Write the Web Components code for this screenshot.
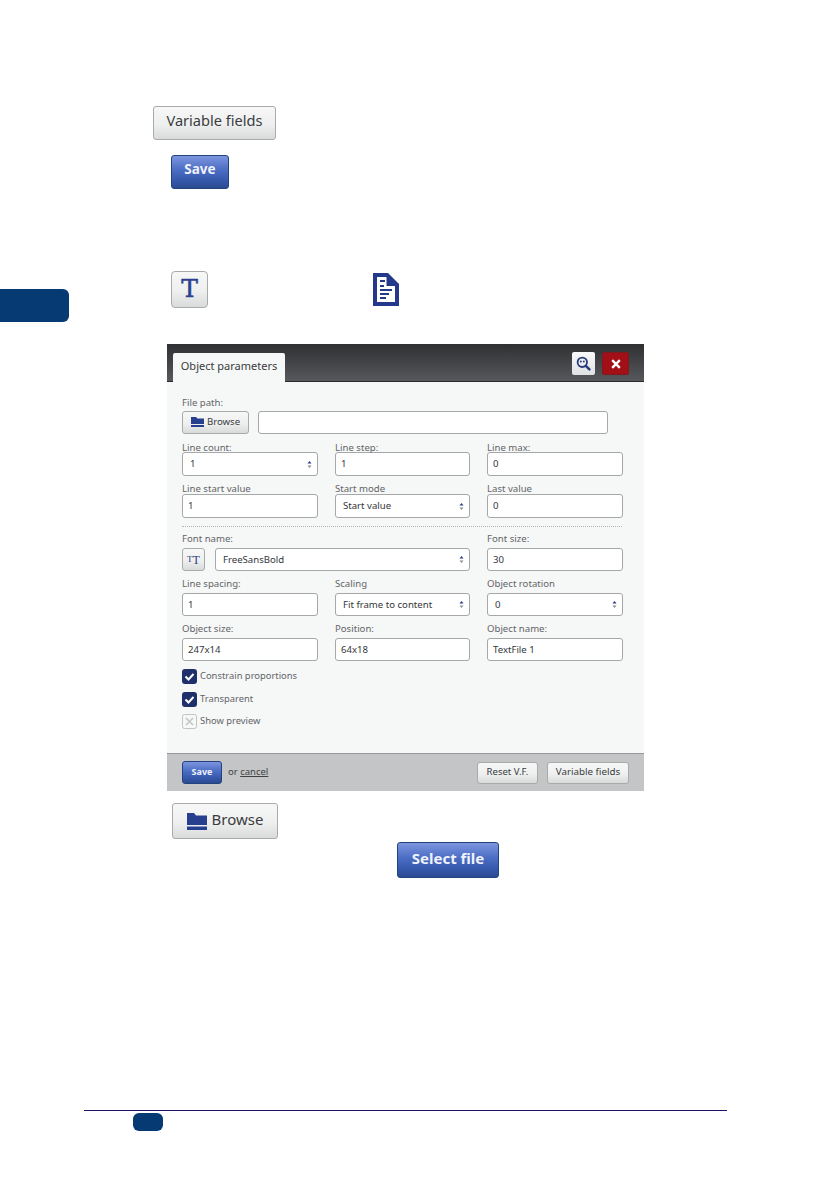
<!DOCTYPE html>
<html>
<head>
<meta charset="utf-8">
<title>Object parameters</title>
<style>
html, body { margin:0; padding:0; background:#fff; }
</style>
</head>
<body>

<template id="tpl-btn">
	<style>
		:host {
			display:inline-flex;
			box-sizing:border-box;
			align-items:center;
			justify-content:center;
			gap:var(--btn-gap, 5px);
			width:var(--w, auto);
			height:var(--h, 23px);
			padding-bottom:var(--pb, 1px);
			border:1px solid #a9abab;
			border-radius:var(--r, 3px);
			background:linear-gradient(#f7f7f7, #eeefef 55%, #d9dada);
			color:#3a3c40;
			font:var(--fs, 11px)/1 "Noto Sans", sans-serif;
			white-space:nowrap;
		}
		:host([blue]) {
			border-color:#23437f;
			background:linear-gradient(#7d95df, #4a6cc3 45%, #3a5cb0 70%, #2a4a92);
			color:#eef2fb;
			font-weight:700;
		}
	</style>
	<slot></slot>
</template>

<template id="tpl-field">
	<style>
		:host { display:block; font:9.6px/1 "Noto Sans", sans-serif; }
		.label {
			height:var(--lh, 10px);
			line-height:var(--lh, 10px);
			color:#636567;
			white-space:nowrap;
		}
		.box {
			box-sizing:border-box;
			height:var(--box, 24px);
			display:flex;
			align-items:center;
			justify-content:space-between;
			padding:0 var(--pr, 5px) 0 var(--pl, 5px);
			background:#fff;
			border:1px solid #a6a8a8;
			border-radius:3px;
			color:#34363a;
			white-space:nowrap;
		}
		svg { display:none; }
		:host([select]) svg { display:block; }
		:host([select]) { --pl:7px; }
	</style>
	<div class="label"></div>
	<div class="box">
		<span class="value"></span>
		<svg width="5" height="9" viewBox="0 0 5 9"><path d="M2.500 1L4.500 3.500H.5z" fill="#2b3a7c"/><path d="M2.500 8L.5 5.500h4z" fill="#8b8d92"/></svg>
	</div>
</template>

<template id="tpl-check">
	<style>
		:host {
			display:flex;
			align-items:center;
			gap:3px;
			height:15px;
			font:9.4px/1 "Noto Sans", sans-serif;
			color:#636567;
		}
		svg { display:block; }
		span { margin-top:-1px; }
	</style>
	<svg width="15" height="15" viewBox="0 0 15 15"></svg>
	<span><slot></slot></span>
</template>

<template id="tpl-dialog">
	<style>
		:host {
			display:flex;
			flex-direction:column;
			box-sizing:border-box;
			width:477px;
			height:447px;
			background:#f6f7f7;
			font-family:"Noto Sans", sans-serif;
		}
		.head {
			height:38px;
			box-sizing:border-box;
			display:flex;
			align-items:flex-end;
			justify-content:space-between;
			padding:0 15px 0 6px;
			background:linear-gradient(#2f3032, #56585c 97%, #2a2b2d 97%);
		}
		.tab {
			box-sizing:border-box;
			width:112px;
			height:29px;
			padding-bottom:4px;
			display:flex;
			align-items:center;
			justify-content:center;
			background:#f6f7f7;
			border-radius:2px 2px 0 0;
			color:#3a3c40;
			font-size:11px;
		}
		.tools { display:flex; gap:7px; align-self:flex-start; margin-top:8px; }
		.tool {
			box-sizing:border-box;
			width:23px;
			height:23px;
			display:flex;
			align-items:center;
			justify-content:center;
			border-radius:2px;
			background:linear-gradient(#fafafa, #dfe1e3);
		}
		.tool.red { width:27px; background:#a30f17; border:1px solid #7e1a1e; }
		.body { flex:1; padding:13px 15px 0; display:flex; flex-direction:column; }
		.file { display:flex; flex-direction:column; }
		.lab { height:16px; line-height:16px; font-size:9.6px; color:#636567; }
		.file .row { display:flex; gap:9px; }
		.file .input {
			box-sizing:border-box;
			width:350px;
			height:23px;
			background:#fff;
			border:1px solid #a6a8a8;
			border-radius:3px;
		}
		.grid {
			display:grid;
			grid-template-columns:136px 135px 136px;
			column-gap:17px;
		}
		.top { row-gap:8px; margin-top:10px; }
		.bottom { row-gap:4px; --lh:18px; --box:23px; }
		.rule { border-top:1px dotted #b5b7b7; margin:8px 0 3px; height:0; width:440px; }
		.font { grid-column:1 / span 2; display:flex; flex-direction:column; }
		.font .lab { height:18px; line-height:18px; }
		.font .row { display:flex; gap:10px; }
		.font x-field { flex:1; --lh:0px; }
		.checks { display:flex; flex-direction:column; gap:7.5px; margin-top:8px; }
		.foot {
			box-sizing:border-box;
			height:38px;
			display:flex;
			align-items:center;
			gap:6px;
			padding:0 15px;
			background:#c3c5c6;
			border-top:1px solid #96989a;
			font-size:9.5px;
			color:#3f4144;
		}
		.foot .txt { padding-bottom:3px; }
		.foot .grow { flex:1; }
		.foot .right { display:flex; gap:9px; --pb:2px; }
	</style>
	<div class="head">
		<div class="tab">Object parameters</div>
		<div class="tools">
			<div class="tool">
				<svg width="15" height="15" viewBox="0 0 15 15" fill="none">
					<circle cx="6.300" cy="6.300" r="4.700" stroke="#27397f" stroke-width="1.800"/>
					<path d="M9.800 9.800l3.600 3.600" stroke="#27397f" stroke-width="2.400" stroke-linecap="round"/>
					<circle cx="4.800" cy="5.600" r="1" fill="#27397f"/><circle cx="7.800" cy="5.600" r="1" fill="#27397f"/>
				</svg>
			</div>
			<div class="tool red">
				<svg width="10" height="10" viewBox="0 0 10 10"><path d="M1.200 1.200l7.600 7.600M8.800 1.200L1.200 8.800" stroke="#fff" stroke-width="2.400"/></svg>
			</div>
		</div>
	</div>
	<div class="body">
		<div class="file">
			<div class="lab">File path:</div>
			<div class="row">
				<x-btn style="--w:67px;--fs:9.6px;--btn-gap:3px;--pb:2px">
					<svg width="13" height="10" viewBox="0 0 13 10"><path d="M0 0h5l1.500 1.500H13V7H0z" fill="#26408f"/><path d="M0 8h13v2H0z" fill="#26408f"/></svg>Browse
				</x-btn>
				<div class="input"></div>
			</div>
		</div>
		<div class="grid top">
			<x-field label="Line count:" value="1" select style="--lh:8px"></x-field>
			<x-field label="Line step:" value="1" style="--lh:8px"></x-field>
			<x-field label="Line max:" value="0" style="--lh:8px"></x-field>
			<x-field label="Line start value" value="1"></x-field>
			<x-field label="Start mode" value="Start value" select></x-field>
			<x-field label="Last value" value="0"></x-field>
		</div>
		<div class="rule"></div>
		<div class="grid bottom">
			<div class="font">
				<div class="lab">Font name:</div>
				<div class="row">
					<x-btn style="--w:23px;--fs:11px;--pb:0">
						<span style="font-family:'Liberation Serif',serif;color:#2b3a7c;display:flex;align-items:flex-end"><span style="font-size:9px;margin-bottom:2px">T</span><span style="font-size:12px">T</span></span>
					</x-btn>
					<x-field value="FreeSansBold" select></x-field>
				</div>
			</div>
			<x-field label="Font size:" value="30"></x-field>
			<x-field label="Line spacing:" value="1"></x-field>
			<x-field label="Scaling" value="Fit frame to content" select></x-field>
			<x-field label="Object rotation" value="0" select></x-field>
			<x-field label="Object size:" value="247x14"></x-field>
			<x-field label="Position:" value="64x18"></x-field>
			<x-field label="Object name:" value="TextFile 1"></x-field>
		</div>
		<div class="checks">
			<x-check checked>Constrain proportions</x-check>
			<x-check checked>Transparent</x-check>
			<x-check>Show preview</x-check>
		</div>
	</div>
	<div class="foot">
		<x-btn blue style="--w:40px;--fs:9px;--pb:2px">Save</x-btn>
		<span class="txt">or <u>cancel</u></span>
		<span class="grow"></span>
		<div class="right">
			<x-btn style="--w:61px;--h:22px;--fs:9.500px">Reset V.F.</x-btn>
			<x-btn style="--w:82px;--h:22px;--fs:9.800px">Variable fields</x-btn>
		</div>
	</div>
</template>

<template id="tpl-page">
	<style>
		:host {
			display:flex;
			flex-direction:column;
			align-items:flex-start;
			position:relative;
			box-sizing:border-box;
			width:839px;
			height:1191px;
			padding-top:106px;
			overflow:hidden;
			background:#fff;
		}
		.save { margin:15px 0 0 171px; }
		.icons { display:flex; align-items:center; margin:82px 0 0 171px; gap:165px; }
		.thumb {
			position:absolute;
			left:0;
			top:289px;
			width:69px;
			height:33px;
			background:#053a72;
			border-radius:0 6px 6px 0;
		}
		x-dialog { margin:36px 0 0 167px; }
		.browse { margin:12px 0 0 172px; }
		.select { margin:3px 0 0 397px; }
		.rule { margin:232px 0 0 84px; width:643px; height:1px; background:#1b1464; flex:none; }
		.tag { margin:2px 0 0 133px; width:30px; height:18px; border-radius:6px; background:#053a72; }
	</style>
	<div class="thumb"></div>
	<x-btn style="margin-left:153px;--w:123px;--h:34px;--fs:14.600px;--pb:5px">Variable fields</x-btn>
	<x-btn blue class="save" style="--w:58px;--h:34px;--fs:13.500px;--pb:4px">Save</x-btn>
	<div class="icons">
		<x-btn style="--w:37px;--h:37px;--r:4px;--pb:2px">
			<span style="font:400 25px/1 'DejaVu Serif',serif;color:#2d3f8f;-webkit-text-stroke:.5px #2d3f8f">T</span>
		</x-btn>
		<svg width="26" height="33" viewBox="0 0 26 33">
			<path fill="#24398c" d="M0 0H15L26 11V33H0z"/>
			<path fill="#fff" d="M4 4H13.500V13H22V29H4z"/>
			<path fill="#24398c" d="M7 7h5v2H7zM7 12h4v2H7zM7 16h12v2H7zM7 20h9v2H7zM7 24h6v2H7z"/>
		</svg>
	</div>
	<x-dialog></x-dialog>
	<x-btn class="browse" style="--w:106px;--h:36px;--fs:15px;--btn-gap:5px;--pb:4px">
		<svg width="20" height="17" viewBox="0 0 20 17" style="margin-top:4px"><path d="M0 0h7l2 2.500h11V12H0z" fill="#26408f"/><path d="M0 13.500h20V17H0z" fill="#26408f"/></svg>Browse
	</x-btn>
	<x-btn blue class="select" style="--w:102px;--h:36px;--fs:15px;--pb:4px">Select file</x-btn>
	<div class="rule"></div>
	<div class="tag"></div>
</template>

<script>
// shadow root from a template, same pattern for every element
function tpl(el, id) {
	let shadowRoot = el.attachShadow({ mode: 'open' });
	shadowRoot.appendChild(document.getElementById(id).content.cloneNode(true));
	return shadowRoot;
}

class xBtn extends HTMLElement {
	constructor() {
		super();
		tpl(this, 'tpl-btn');
	}
}
class xField extends HTMLElement {
	constructor() {
		super();
		tpl(this, 'tpl-field');
	}
	connectedCallback() {
		this.shadowRoot.querySelector('.label').textContent = this.getAttribute('label') || '';
		this.shadowRoot.querySelector('.value').textContent = this.getAttribute('value') || '';
	}
}
class xCheck extends HTMLElement {
	constructor() {
		super();
		tpl(this, 'tpl-check');
	}
	connectedCallback() {
		var svg = this.shadowRoot.querySelector('svg');
		if (this.hasAttribute('checked')) {
			svg.innerHTML = '<rect width="15" height="15" rx="3" fill="#1f2f6b"/><path d="M3.500 7.500l3 3 5-5.500" fill="none" stroke="#fff" stroke-width="2"/>';
		} else {
			svg.innerHTML = '<rect x=".5" y=".5" width="14" height="14" rx="2" fill="#f6f7f7" stroke="#c2c3c4"/><path d="M4 4l7 7M11 4l-7 7" stroke="#c2c3c4" stroke-width="1.500"/>';
		}
	}
}
class xDialog extends HTMLElement {
	constructor() {
		super();
		tpl(this, 'tpl-dialog');
	}
}
class xPage extends HTMLElement {
	constructor() {
		super();
		tpl(this, 'tpl-page');
	}
}
customElements.define('x-btn', xBtn);
customElements.define('x-field', xField);
customElements.define('x-check', xCheck);
customElements.define('x-dialog', xDialog);
customElements.define('x-page', xPage);
</script>
<x-page></x-page>
</body>
</html>
